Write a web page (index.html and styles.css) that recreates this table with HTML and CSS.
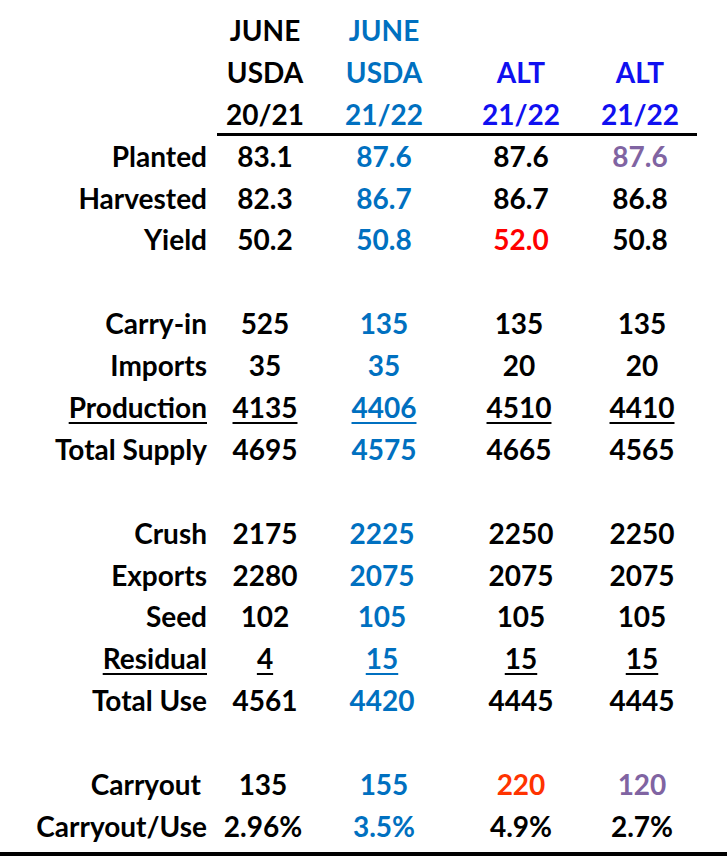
FILE: index.html
```html
<!DOCTYPE html>
<html>
<head>
<meta charset="utf-8">
<link rel="stylesheet" href="styles.css">
</head>
<body>
<div class="page">
  <div class="table">
    <div class="lbl"></div><div class="cell">JUNE</div><div class="cell blue">JUNE</div><div class="cell"></div><div class="cell"></div>
    <div class="lbl"></div><div class="cell">USDA</div><div class="cell blue">USDA</div><div class="cell alt">ALT</div><div class="cell alt">ALT</div>
    <div class="lbl"></div><div class="cell rule">20/21</div><div class="cell rule blue">21/22</div><div class="cell rule alt">21/22</div><div class="cell rule alt">21/22</div>

    <div class="lbl">Planted</div><div class="cell">83.1</div><div class="cell blue">87.6</div><div class="cell">87.6</div><div class="cell purple">87.6</div>
    <div class="lbl">Harvested</div><div class="cell">82.3</div><div class="cell blue">86.7</div><div class="cell">86.7</div><div class="cell">86.8</div>
    <div class="lbl">Yield</div><div class="cell">50.2</div><div class="cell blue">50.8</div><div class="cell red">52.0</div><div class="cell">50.8</div>
    <div class="spacer"></div>

    <div class="lbl">Carry-in</div><div class="cell">525</div><div class="cell blue">135</div><div class="cell">135</div><div class="cell">135</div>
    <div class="lbl">Imports</div><div class="cell">35</div><div class="cell blue">35</div><div class="cell">20</div><div class="cell">20</div>
    <div class="lbl"><span class="u">Production</span></div><div class="cell"><span class="u">4135</span></div><div class="cell blue"><span class="u">4406</span></div><div class="cell"><span class="u">4510</span></div><div class="cell"><span class="u">4410</span></div>
    <div class="lbl">Total Supply</div><div class="cell">4695</div><div class="cell blue">4575</div><div class="cell">4665</div><div class="cell">4565</div>
    <div class="spacer"></div>

    <div class="lbl">Crush</div><div class="cell">2175</div><div class="cell blue">2225</div><div class="cell">2250</div><div class="cell">2250</div>
    <div class="lbl">Exports</div><div class="cell">2280</div><div class="cell blue">2075</div><div class="cell">2075</div><div class="cell">2075</div>
    <div class="lbl">Seed</div><div class="cell">102</div><div class="cell blue">105</div><div class="cell">105</div><div class="cell">105</div>
    <div class="lbl"><span class="u">Residual</span></div><div class="cell"><span class="u">4</span></div><div class="cell blue"><span class="u">15</span></div><div class="cell"><span class="u">15</span></div><div class="cell"><span class="u">15</span></div>
    <div class="lbl">Total Use</div><div class="cell">4561</div><div class="cell blue">4420</div><div class="cell">4445</div><div class="cell">4445</div>
    <div class="spacer"></div>

    <div class="lbl carry">Carryout</div><div class="cell">135</div><div class="cell blue">155</div><div class="cell orange">220</div><div class="cell purple">120</div>
    <div class="lbl">Carryout/Use</div><div class="cell">2.96%</div><div class="cell blue">3.5%</div><div class="cell">4.9%</div><div class="cell">2.7%</div>
  </div>
</div>
</body>
</html>
```

FILE: styles.css
```css
html, body {
  margin: 0;
  padding: 0;
  background: #ffffff;
}

.page {
  box-sizing: border-box;
  width: 727px;
  height: 856px;
  padding-top: 10px;
  border-bottom: 4px solid #000000;
  font-family: "Lato", "Open Sans", sans-serif;
  font-weight: 700;
  font-size: 28px;
  color: #000000;
}

.table {
  display: grid;
  grid-template-columns: 217px 96px 142px 132px 110px;
  grid-auto-rows: 41.9px;
}

.lbl {
  text-align: right;
  padding-right: 10px;
  line-height: 41.9px;
  white-space: nowrap;
}

.lbl.carry {
  padding-right: 16px;
}

.cell {
  text-align: center;
  line-height: 41.9px;
  white-space: nowrap;
}

.cell:nth-child(5n) {
  padding-right: 4px;
}

.rule {
  box-sizing: border-box;
  border-bottom: 3px solid #000000;
  line-height: 40px;
}

.spacer {
  grid-column: 1 / -1;
}

.blue { color: #0070c0; }
.alt { color: #1010f0; }
.red { color: #ff0000; }
.orange { color: #ff3300; }
.purple { color: #8064a2; }

.u {
  text-decoration: underline;
  text-decoration-thickness: 2px;
  text-underline-offset: 4px;
}
```
